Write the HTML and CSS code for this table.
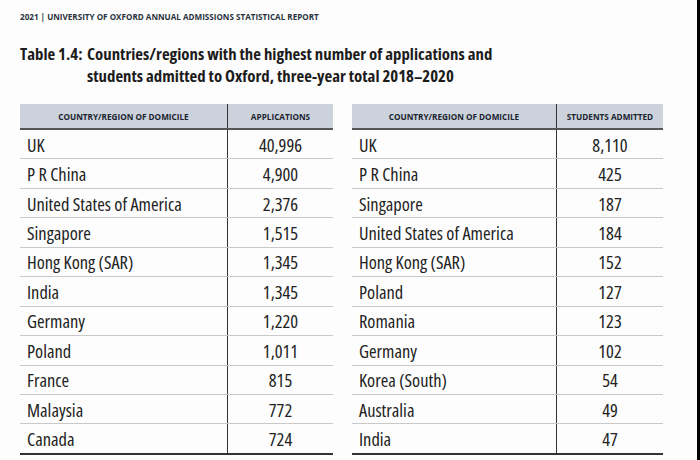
FILE: index.html
```html
<!DOCTYPE html>
<html>
<head>
<meta charset="utf-8">
<link rel="stylesheet" href="styles.css">
</head>
<body>
<div class="frame">
  <div class="page">
    <div class="running-head">2021 | UNIVERSITY OF OXFORD ANNUAL ADMISSIONS STATISTICAL REPORT</div>
    <h1 class="title">
      <span class="title-label">Table 1.4:</span>
      <span class="title-text">Countries/regions with the highest number of applications and students admitted to Oxford, three-year total 2018–2020</span>
    </h1>
    <div class="tables">
      <table class="data data-left">
        <thead>
          <tr><th class="c-name">COUNTRY/REGION OF DOMICILE</th><th class="c-num">APPLICATIONS</th></tr>
        </thead>
        <tbody>
          <tr><td>UK</td><td class="num">40,996</td></tr>
          <tr><td>P R China</td><td class="num">4,900</td></tr>
          <tr><td>United States of America</td><td class="num">2,376</td></tr>
          <tr><td>Singapore</td><td class="num">1,515</td></tr>
          <tr><td>Hong Kong (SAR)</td><td class="num">1,345</td></tr>
          <tr><td>India</td><td class="num">1,345</td></tr>
          <tr><td>Germany</td><td class="num">1,220</td></tr>
          <tr><td>Poland</td><td class="num">1,011</td></tr>
          <tr><td>France</td><td class="num">815</td></tr>
          <tr><td>Malaysia</td><td class="num">772</td></tr>
          <tr><td>Canada</td><td class="num">724</td></tr>
        </tbody>
      </table>
      <table class="data data-right">
        <thead>
          <tr><th class="c-name">COUNTRY/REGION OF DOMICILE</th><th class="c-num">STUDENTS ADMITTED</th></tr>
        </thead>
        <tbody>
          <tr><td>UK</td><td class="num">8,110</td></tr>
          <tr><td>P R China</td><td class="num">425</td></tr>
          <tr><td>Singapore</td><td class="num">187</td></tr>
          <tr><td>United States of America</td><td class="num">184</td></tr>
          <tr><td>Hong Kong (SAR)</td><td class="num">152</td></tr>
          <tr><td>Poland</td><td class="num">127</td></tr>
          <tr><td>Romania</td><td class="num">123</td></tr>
          <tr><td>Germany</td><td class="num">102</td></tr>
          <tr><td>Korea (South)</td><td class="num">54</td></tr>
          <tr><td>Australia</td><td class="num">49</td></tr>
          <tr><td>India</td><td class="num">47</td></tr>
        </tbody>
      </table>
    </div>
  </div>
  <div class="edge"></div>
</div>
</body>
</html>
```

FILE: styles.css
```css
html, body {
  margin: 0;
  padding: 0;
  background: #fdfdfd;
}
body {
  font-family: "Open Sans", "DejaVu Sans Condensed", sans-serif;
  font-stretch: 75%;
  color: #222;
}
.frame {
  display: flex;
  width: 700px;
  height: 460px;
  overflow: hidden;
}
.page {
  flex: 1;
  padding: 11px 0 0 20px;
}
.edge {
  width: 3px;
  background: #000;
}
.running-head {
  font-size: 8.1px;
  font-stretch: 100%;
  font-weight: 700;
  color: #2a3340;
  line-height: 12px;
}
.title {
  display: flex;
  margin: 20px 0 0 0;
  font-size: 16.8px;
  line-height: 22px;
  font-weight: 700;
  color: #1c1c1c;
}
.title-label {
  flex: none;
  width: 67px;
}
.title-text {
  width: 440px;
}
.tables {
  display: flex;
  gap: 19px;
  margin-top: 17px;
}
.data {
  border-collapse: collapse;
  table-layout: fixed;
}
.data-left { width: 313px; }
.data-right { width: 311px; }
.data-left .c-name { width: 207px; }
.data-right .c-name { width: 204px; }
.data th {
  background: #cbd2dc;
  height: 24px;
  padding: 0;
  font-size: 8.2px;
  font-stretch: 100%;
  font-weight: 700;
  color: #1c2430;
  text-align: center;
  border-bottom: 2px solid #555;
}
.data th + th,
.data td + td {
  border-left: 1px solid #333;
}
.data td {
  height: 28.45px;
  padding: 0 0 0 7px;
  font-size: 18.4px;
  color: #222;
  border-bottom: 1px solid #c9c9c9;
  white-space: nowrap;
}
.data td.num {
  text-align: center;
  padding: 0;
}
.data tbody tr:last-child td {
  border-bottom: 2px solid #333;
}
```
